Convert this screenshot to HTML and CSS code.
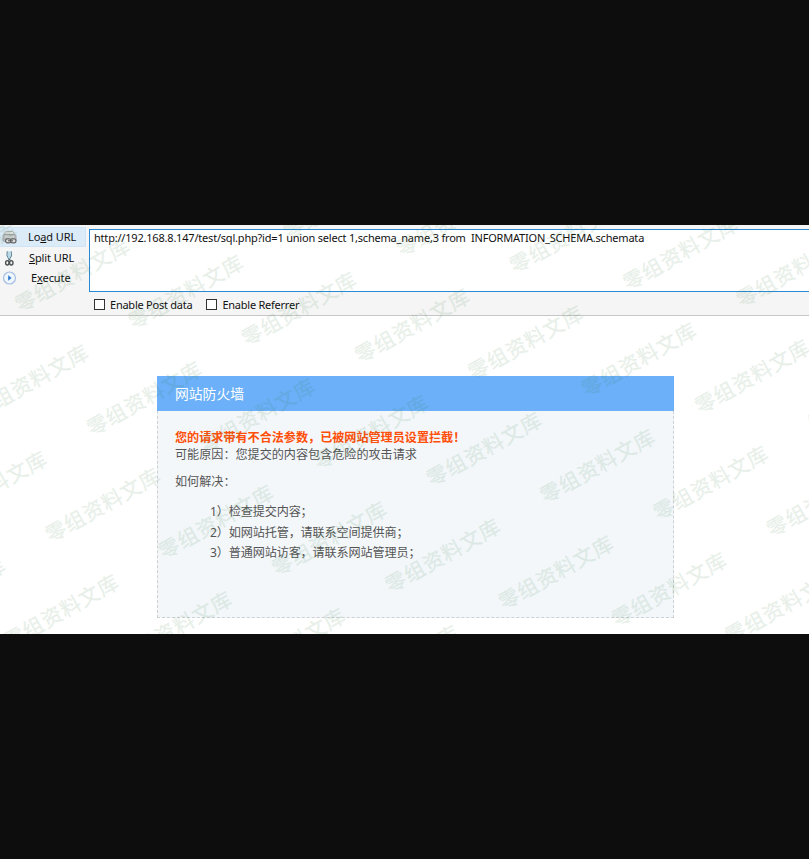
FILE: index.html
```html
<!DOCTYPE html>
<html lang="zh-CN">
<head>
<meta charset="utf-8">
<title>网站防火墙</title>
<link rel="stylesheet" href="styles.css">
</head>
<body>
<main class="window">
  <section class="hackbar">
    <nav class="actions">
      <button class="action active">
        <svg class="icon" width="16" height="16" viewBox="0 0 16 16">
          <path d="M4.5 2.5h7.5l2 4h-11z" fill="#e0e2e4" stroke="#b5b8bb"/>
          <rect x="2" y="5.5" width="13" height="7" rx="1.5" fill="#bcbec0" stroke="#a2a5a8"/>
          <path d="M4 8h9" stroke="#e9eaeb"/>
          <rect x="4.5" y="9.8" width="5.5" height="4" rx="2" fill="#ddd" stroke="#66696b" stroke-width="1.2"/>
          <rect x="9.5" y="9.8" width="5.5" height="4" rx="2" fill="#ddd" stroke="#66696b" stroke-width="1.2"/>
          <path d="M7 11.8h5" stroke="#555"/>
        </svg>
        <span class="label load">Lo<u>a</u>d URL</span>
      </button>
      <button class="action">
        <svg class="icon" width="16" height="16" viewBox="0 0 16 16">
          <path d="M6.3 1.2L6 5.5l2.5 5M10.2 1.2l.3 4.3-2.8 5" fill="none" stroke="#66899b" stroke-width="1.2"/>
          <path d="M7 1.5h2.4l.2 4.5L8.2 9 6.8 6z" fill="#b7d9e8"/>
          <ellipse cx="6.3" cy="12.8" rx="1.7" ry="2.2" fill="none" stroke="#4c5053" stroke-width="1.4"/>
          <ellipse cx="10.3" cy="12.8" rx="1.7" ry="2.2" fill="none" stroke="#4c5053" stroke-width="1.4"/>
          <path d="M7 10.7l1.5-1.5 1.4 1.5" fill="none" stroke="#4c5053"/>
        </svg>
        <span class="label split"><u>S</u>plit URL</span>
      </button>
      <button class="action">
        <svg class="icon" width="16" height="16" viewBox="0 0 16 16">
          <circle cx="8.5" cy="8" r="6" fill="#dce9f9" stroke="#a9bfe2" stroke-width="1.2"/>
          <circle cx="8.5" cy="8" r="4.4" fill="#edf5fd" stroke="#f8fbff"/>
          <path d="M7.2 5.2L10.5 8l-3.3 2.8z" fill="#2d78cf"/>
        </svg>
        <span class="label exec">E<u>x</u>ecute</span>
      </button>
    </nav>
    <div class="editor">
      <div class="url"><span class="url-text">http://192.168.8.147/test/sql.php?id=1 union select 1,schema_name,3 from&nbsp; INFORMATION_SCHEMA.schemata</span></div>
      <div class="options">
        <label class="option"><i class="box"></i><span class="post">Enable Post data</span></label>
        <label class="option"><i class="box"></i><span>Enable Referrer</span></label>
      </div>
    </div>
  </section>
  <section class="card">
    <h1 class="title">网站防火墙</h1>
    <div class="body">
      <p class="alert">您的请求带有不合法参数，已被网站管理员设置拦截！</p>
      <p class="reason">可能原因：您提交的内容包含危险的攻击请求</p>
      <p class="how">如何解决：</p>
      <ul class="steps">
        <li>1）检查提交内容；</li>
        <li>2）如网站托管，请联系空间提供商；</li>
        <li>3）普通网站访客，请联系网站管理员；</li>
      </ul>
    </div>
  </section>
  <svg class="watermark" width="809" height="409" viewBox="0 225 809 409">
    <defs>
      <text id="mark" transform="rotate(-29.3)" x="-9.5" y="7.5" class="mark">零组资料文库</text>
      <g id="row">
        <use href="#mark" x="-226.6" y="-33.8"/>
        <use href="#mark" x="-113.3" y="-16.9"/>
        <use href="#mark"/>
        <use href="#mark" x="113.3" y="16.9"/>
        <use href="#mark" x="226.6" y="33.8"/>
        <use href="#mark" x="339.9" y="50.7"/>
        <use href="#mark" x="453.2" y="67.6"/>
        <use href="#mark" x="566.5" y="84.5"/>
        <use href="#mark" x="679.8" y="101.4"/>
        <use href="#mark" x="793.1" y="118.3"/>
        <use href="#mark" x="906.4" y="135.2"/>
      </g>
    </defs>
    <use href="#row" x="108" y="88.8"/>
    <use href="#row" x="66.5" y="195.3"/>
    <use href="#row" x="25" y="301.8"/>
    <use href="#row" x="-16.5" y="408.3"/>
    <use href="#row" x="-58" y="514.8"/>
    <use href="#row" x="-99.5" y="621.3"/>
  </svg>
</main>
</body>
</html>
```
FILE: styles.css
```css
* { box-sizing: border-box; }
body {
  margin: 0;
  padding: 225px 0;
  height: 859px;
  overflow: hidden;
  background: #0d0d0d;
  font-family: "Noto Sans", "Noto Sans CJK SC", sans-serif;
}
.window {
  position: relative;
  height: 409px;
  overflow: hidden;
  background: #fff;
}
.hackbar {
  display: flex;
  height: 91px;
  background: #f5f5f5;
  border-bottom: 1px solid #c6c6c6;
}
.actions { width: 89px; padding-top: 2px; flex: none; }
.action {
  display: flex;
  align-items: center;
  width: 86px;
  height: 20px;
  margin: 0;
  padding: 0 0 0 1px;
  border: 0;
  background: none;
  font: 11px/18px "Noto Sans", sans-serif;
  letter-spacing: -.1px;
  color: #111;
}
.action.active { margin-bottom: 1px; background: #dcebf8; border: 1px solid #cfe4f7; border-left: 0; }
.icon { flex: none; }
.label { white-space: nowrap; }
.load { margin-left: 11px; }
.split { margin-left: 12px; }
.exec { margin-left: 14px; }
.editor { flex: 1; padding-top: 4px; }
.url {
  height: 63px;
  padding: 0 4px;
  border: 1px solid #2b8ad6;
  border-right: 0;
  background: #fff;
  font-size: 11px;
  line-height: 16px;
  letter-spacing: -.2px;
  color: #111;
  white-space: nowrap;
}
.options {
  display: flex;
  gap: 14px;
  padding: 4px 0 0 5px;
  font-size: 11px;
  line-height: 17px;
  letter-spacing: -.24px;
  color: #111;
}
.option { display: flex; align-items: center; gap: 5px; white-space: nowrap; }
.box { width: 11px; height: 11px; border: 1px solid #333; background: #fff; }
.card {
  width: 517px;
  height: 242px;
  margin: 60px 0 0 157px;
  background: #f3f7fa;
  border: 1px dashed #ccd1d3;
  border-top: 0;
}
.title {
  margin: 0 -1px;
  height: 35px;
  padding-left: 18px;
  background: #6bb0f8;
  color: #fff;
  font-size: 13.8px;
  font-weight: 400;
  line-height: 35px;
}
.body {
  padding: 18px 17px;
  color: #555;
  font-size: 12.1px;
  line-height: 17px;
}
.body p { margin: 0; white-space: nowrap; }
.body .alert { color: #ff4f08; font-weight: 700; }
.body .how { margin-top: 10px; }
.steps { list-style: none; margin: 12px 0 0; padding: 0 0 0 35px; line-height: 20.6px; letter-spacing: -.12px; }
.watermark { position: absolute; top: 0; left: 0; pointer-events: none; }
.mark {
  font: 400 20.5px "Noto Sans CJK SC", sans-serif;
  letter-spacing: .9px;
  fill: #2f7a38;
  stroke: #2f7a38;
  stroke-width: .3px;
  opacity: .11;
}
```
